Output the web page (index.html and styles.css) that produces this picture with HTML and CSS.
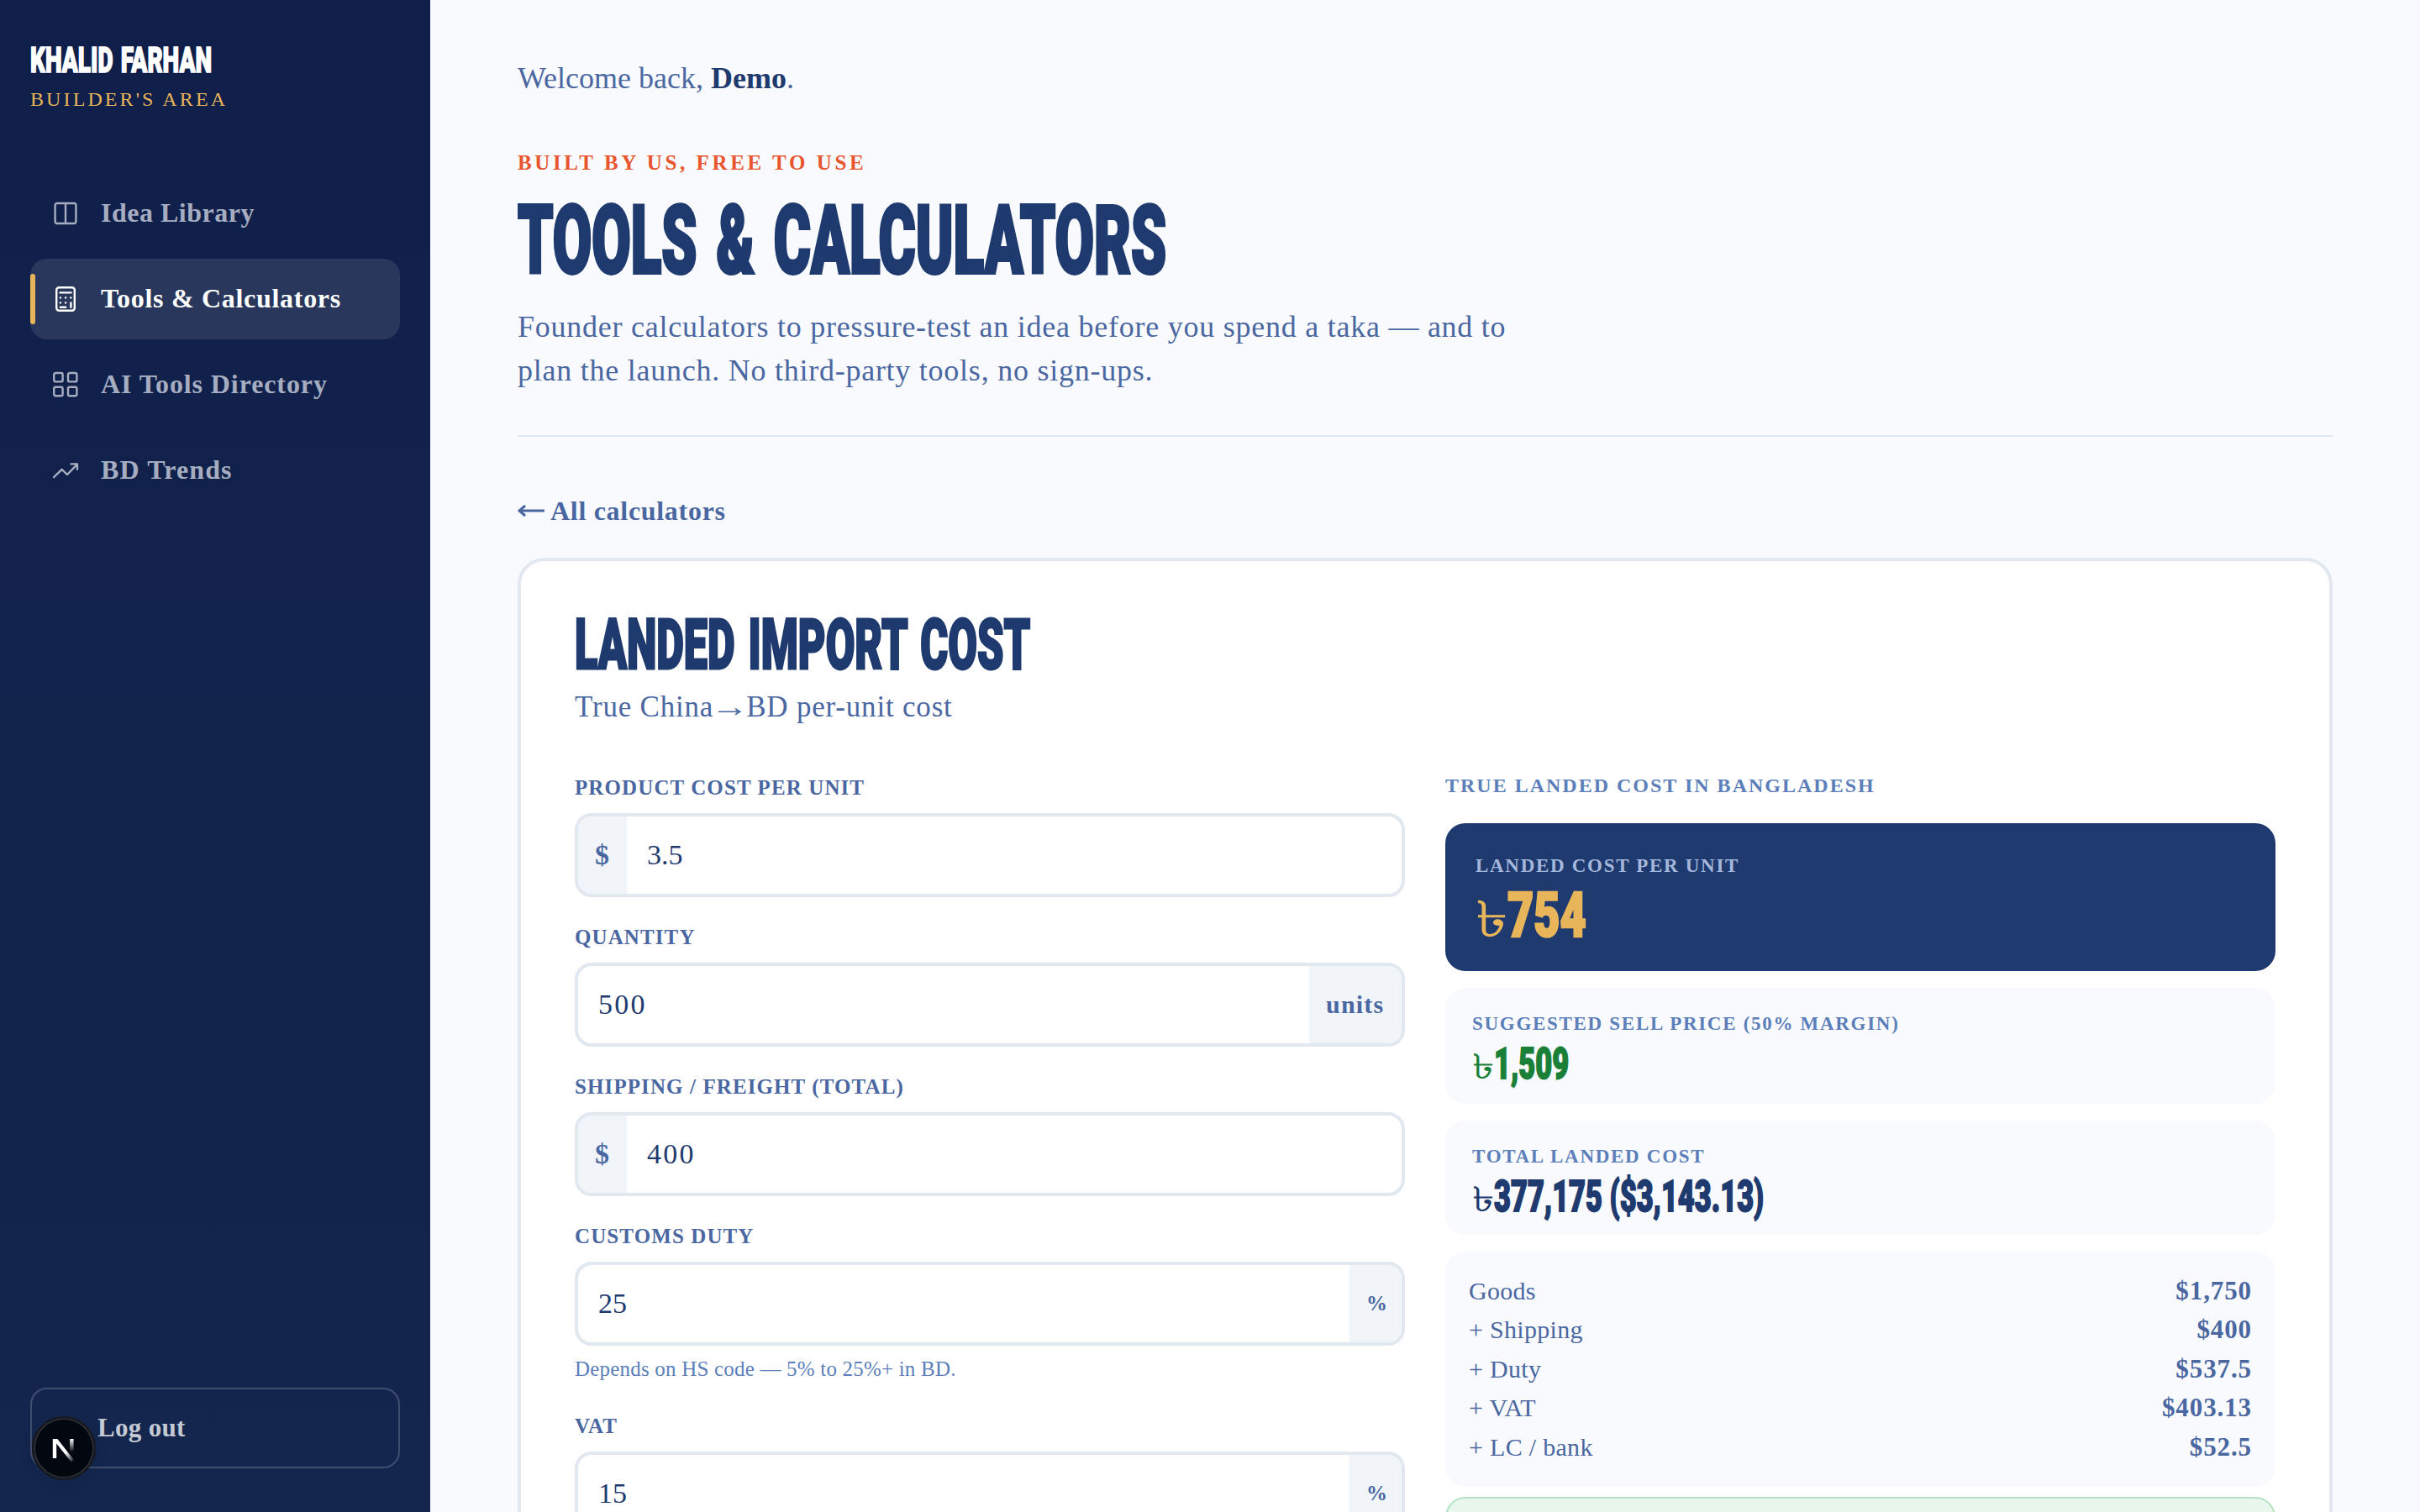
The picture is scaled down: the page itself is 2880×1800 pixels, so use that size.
FILE: index.html
```html
<!DOCTYPE html>
<html lang="en">
<head>
    <meta charset="UTF-8" />
    <title>Tools & Calculators</title>
    <link rel="stylesheet" href="styles.css">
</head>
<body>
    <aside class="sidebar">
        <div class="brand"><span class="display">KHALID FARHAN</span></div>
        <div class="brand-sub">BUILDER'S AREA</div>
        <nav class="nav">
            <a class="nav-item">
                <svg viewBox="0 0 18 18"><rect x="2.8" y="3" width="12.4" height="12" rx="1.2" /><path d="M9 3v12" /></svg>
                <span class="nav-ideas">Idea Library</span>
            </a>
            <a class="nav-item active">
                <svg viewBox="0 0 18 18"><rect x="3.6" y="2.1" width="10.8" height="13.8" rx="1.5" /><path d="M5.8 5.2h6.5M5.9 8.2h.1M9 8.2h.1M12.1 8.2h.1M5.9 11.2h.1M9 11.2h.1M5.9 13.9h3.2M12.2 11.2v2.7" /></svg>
                <span class="nav-tools">Tools & Calculators</span>
            </a>
            <a class="nav-item">
                <svg viewBox="0 0 18 18"><rect x="2.1" y="2" width="5.2" height="5.2" rx="1" /><rect x="10.5" y="2" width="5.2" height="5.2" rx="1" /><rect x="2.1" y="10.4" width="5.2" height="5.2" rx="1" /><rect x="10.5" y="10.4" width="5.2" height="5.2" rx="1" /></svg>
                <span class="nav-ai">AI Tools Directory</span>
            </a>
            <a class="nav-item">
                <svg viewBox="0 0 18 18"><path d="M2 13.1l4.8-4.7 3.2 3.1 6-6.2M12.3 5.2H16v3.2" /></svg>
                <span class="nav-trends">BD Trends</span>
            </a>
        </nav>
        <button class="logout">Log out</button>
    </aside>

    <main class="main">
        <p class="welcome">Welcome back, <strong>Demo</strong>.</p>
        <header class="page-header">
            <p class="eyebrow">BUILT BY US, FREE TO USE</p>
            <h1><span class="display">TOOLS & CALCULATORS</span></h1>
            <p class="intro">Founder calculators to pressure-test an idea before you spend a taka — and to<br>plan the launch. No third-party tools, no sign-ups.</p>
        </header>
        <a class="back"><svg class="arrow" viewBox="0 0 32 20"><path d="M32 10H2M9 4l-7 6 7 6" /></svg><span>All calculators</span></a>

        <section class="card">
            <h2><span class="display">LANDED IMPORT COST</span></h2>
            <p class="card-sub">True China<span class="arrow-text">→</span>BD per-unit cost</p>
            <div class="columns">
                <form class="fields">
                    <label class="field">
                        <span class="field-label">PRODUCT COST PER UNIT</span>
                        <span class="control"><span class="prefix">$</span><span class="value">3.5</span></span>
                    </label>
                    <label class="field">
                        <span class="field-label">QUANTITY</span>
                        <span class="control"><span class="value wide">500</span><span class="suffix units">units</span></span>
                    </label>
                    <label class="field">
                        <span class="field-label">SHIPPING / FREIGHT (TOTAL)</span>
                        <span class="control"><span class="prefix">$</span><span class="value wide">400</span></span>
                    </label>
                    <label class="field">
                        <span class="field-label">CUSTOMS DUTY</span>
                        <span class="control"><span class="value">25</span><span class="suffix">%</span></span>
                        <span class="hint">Depends on HS code — 5% to 25%+ in BD.</span>
                    </label>
                    <label class="field">
                        <span class="field-label">VAT</span>
                        <span class="control"><span class="value">15</span><span class="suffix">%</span></span>
                    </label>
                </form>

                <div class="results">
                    <p class="results-title">TRUE LANDED COST IN BANGLADESH</p>
                    <div class="result primary">
                        <span class="result-label">LANDED COST PER UNIT</span>
                        <span class="amount"><span class="taka">৳</span><span class="display">754</span></span>
                    </div>
                    <div class="result">
                        <span class="result-label">SUGGESTED SELL PRICE (50% MARGIN)</span>
                        <span class="amount green"><span class="taka">৳</span><span class="display">1,509</span></span>
                    </div>
                    <div class="result total">
                        <span class="result-label">TOTAL LANDED COST</span>
                        <span class="amount"><span class="taka">৳</span><span class="display">377,175 ($3,143.13)</span></span>
                    </div>
                    <div class="breakdown">
                        <div class="row"><span>Goods</span><b>$1,750</b></div>
                        <div class="row"><span>+ Shipping</span><b>$400</b></div>
                        <div class="row"><span>+ Duty</span><b>$537.5</b></div>
                        <div class="row"><span>+ VAT</span><b>$403.13</b></div>
                        <div class="row"><span>+ LC / bank</span><b>$52.5</b></div>
                    </div>
                    <div class="notice"></div>
                </div>
            </div>
        </section>
    </main>

    <div class="dev-badge">
        <svg viewBox="0 0 40 40">
            <defs>
                <linearGradient id="fade-a" x1="0" y1="0" x2="1" y2="1"><stop offset="0.6" stop-color="#fff" /><stop offset="1" stop-color="#fff" stop-opacity="0" /></linearGradient>
                <linearGradient id="fade-b" x1="0" y1="0" x2="0" y2="1"><stop offset="0" stop-color="#fff" /><stop offset="1" stop-color="#fff" stop-opacity="0" /></linearGradient>
            </defs>
            <path d="M8 10h5l18 23-3 2L12 15v16H8z" fill="url(#fade-a)" />
            <path d="M26.5 10h4v14h-4z" fill="url(#fade-b)" />
        </svg>
    </div>
</body>
</html>
```
FILE: styles.css
```css
:root {
    --navy: #1e3a6e;
    --blue: #4a67a1;
    --light-blue: #5c7fba;
    --gold: #e8b55a;
    --line: #e2e8f0;
    --page: #f8fafd;
}

* {
    box-sizing: border-box;
}

body {
    margin: 0;
    height: 1800px;
    display: flex;
    overflow: hidden;
    background-color: var(--page);
    color: var(--blue);
    font-family: "Liberation Serif", serif;
}

p, h1, h2 {
    margin: 0;
    white-space: nowrap;
}

/* Heavy condensed display face */
.display {
    display: inline-block;
    font-family: Roboto, "Liberation Sans", sans-serif;
    font-weight: 900;
    -webkit-text-stroke: 0.035em currentColor;
    transform-origin: left center;
    white-space: nowrap;
}

/* Sidebar */
.sidebar {
    width: 512px;
    height: 1800px;
    flex-shrink: 0;
    padding: 44px 36px 52px;
    display: flex;
    flex-direction: column;
    background: linear-gradient(#0f1f4a, #14264d);
}

.brand {
    height: 54px;
    line-height: 54px;
    color: white;
    font-size: 43px;
}

.brand .display {
    word-spacing: 0.08em;
    transform: scaleX(0.65);
}

.brand-sub {
    height: 40px;
    line-height: 40px;
    color: var(--gold);
    font-size: 24px;
    letter-spacing: 3.1px;
}

.nav {
    margin-top: 68px;
    display: flex;
    flex-direction: column;
    gap: 6px;
}

.nav-item {
    height: 96px;
    padding-left: 24px;
    display: flex;
    align-items: center;
    gap: 24px;
    border-radius: 20px;
    color: #a6adc0;
    font-size: 32px;
    font-weight: bold;
}

.nav-item svg {
    width: 36px;
    height: 36px;
    fill: none;
    stroke: currentColor;
    stroke-width: 1.2;
    stroke-linecap: round;
    stroke-linejoin: round;
}

.nav-item.active {
    position: relative;
    background-color: #28375b;
    color: white;
}

.nav-item.active::before {
    content: "";
    position: absolute;
    left: 0;
    top: 18px;
    width: 6px;
    height: 60px;
    border-radius: 3px;
    background-color: var(--gold);
}

.nav-item span {
    padding-bottom: 2px;
}

.nav-ideas {
    letter-spacing: 0.5px;
}

.nav-tools {
    letter-spacing: 0.7px;
}

.nav-ai {
    letter-spacing: 0.9px;
}

.nav-trends {
    letter-spacing: 1.1px;
}

.logout {
    margin-top: auto;
    height: 96px;
    padding: 0 0 0 78px;
    border: 2px solid #414e70;
    border-radius: 20px;
    background: none;
    color: #c4c9d4;
    font-family: inherit;
    font-size: 31px;
    font-weight: bold;
    letter-spacing: 0.3px;
    text-align: left;
}

.dev-badge {
    position: absolute;
    left: 38px;
    top: 1686px;
    width: 76px;
    height: 76px;
    padding: 14px;
    border: 2px solid #17191d;
    border-radius: 50%;
    background-color: #03070f;
    box-shadow: inset 0 0 0 2px #2b2e36, 0 4px 16px rgba(0, 0, 0, 0.1);
}

/* Page */
.main {
    flex: 1;
    padding: 68px 104px 0;
}

.welcome {
    height: 50px;
    line-height: 50px;
    font-size: 36px;
}

.welcome strong {
    color: var(--navy);
}

.page-header {
    height: 402px;
    padding-top: 56px;
    border-bottom: 2px solid var(--line);
}

.eyebrow {
    height: 40px;
    line-height: 40px;
    color: #e8552f;
    font-size: 25px;
    font-weight: bold;
    letter-spacing: 3.6px;
}

h1 {
    height: 112px;
    margin-top: 17px;
    line-height: 112px;
    color: var(--navy);
    font-size: 113px;
}

h1 .display {
    word-spacing: 0.09em;
    transform: scaleX(0.597);
}

.intro {
    margin-top: 20px;
    line-height: 52px;
    font-size: 36px;
    letter-spacing: 0.75px;
}

.back {
    height: 50px;
    margin-top: 63px;
    display: flex;
    align-items: center;
    gap: 7px;
    font-size: 32px;
    font-weight: bold;
    letter-spacing: 0.7px;
}

.arrow {
    width: 32px;
    height: 20px;
    fill: none;
    stroke: currentColor;
    stroke-width: 3;
}

.card {
    height: 1300px;
    margin-top: 31px;
    padding: 60px 64px;
    background-color: white;
    border: 4px solid var(--line);
    border-radius: 32px;
}

h2 {
    height: 80px;
    line-height: 80px;
    color: var(--navy);
    font-size: 83px;
}

h2 .display {
    word-spacing: 0.07em;
    transform: scaleX(0.606);
}

.card-sub {
    height: 44px;
    margin-top: 12px;
    line-height: 44px;
    font-size: 35px;
    letter-spacing: 0.8px;
}

.arrow-text {
    display: inline-block;
    width: 35px;
    margin: 0 2px;
    line-height: 1;
    letter-spacing: 0;
    transform: scaleX(1.3);
}

.columns {
    margin-top: 54px;
    display: grid;
    grid-template-columns: 988px 988px;
    gap: 48px;
}

.fields {
    padding-top: 3px;
    display: flex;
    flex-direction: column;
    gap: 31px;
}

.field {
    display: flex;
    flex-direction: column;
}

.field-label {
    height: 34px;
    margin-bottom: 13px;
    line-height: 34px;
    font-size: 25px;
    font-weight: bold;
    letter-spacing: 1.1px;
}

.control {
    height: 100px;
    display: flex;
    border: 4px solid var(--line);
    border-radius: 20px;
    overflow: hidden;
}

.value {
    flex: 1;
    padding-left: 24px;
    line-height: 92px;
    color: var(--navy);
    font-size: 34px;
}

.value.wide {
    letter-spacing: 2.2px;
}

.prefix,
.suffix {
    padding-left: 20px;
    background-color: #f1f5fa;
    line-height: 92px;
    font-weight: bold;
}

.prefix {
    width: 58px;
    font-size: 34px;
}

.suffix {
    width: 62px;
    font-size: 25px;
}

.suffix.units {
    width: 110px;
    font-size: 30px;
    letter-spacing: 1.2px;
}

.hint {
    height: 36px;
    margin: 10px 0 2px;
    line-height: 36px;
    color: var(--light-blue);
    font-size: 25px;
    letter-spacing: 0.2px;
}

/* Results */
.results-title {
    height: 34px;
    margin-bottom: 28px;
    line-height: 34px;
    color: var(--light-blue);
    font-size: 24px;
    font-weight: bold;
    letter-spacing: 2px;
}

.result {
    height: 138px;
    margin-bottom: 20px;
    padding: 28px 32px;
    border-radius: 24px;
    background-color: var(--page);
    color: var(--navy);
}

.result.total {
    height: 136px;
}

.result-label {
    display: block;
    height: 30px;
    line-height: 30px;
    color: var(--light-blue);
    font-size: 23px;
    font-weight: bold;
    letter-spacing: 1.7px;
}

.amount {
    display: flex;
    align-items: baseline;
    height: 60px;
    padding-top: 3px;
    line-height: 60px;
    font-size: 51px;
}

.amount .display {
    transform: scaleX(0.675);
}

/* The currency sign is lighter and shorter than the digits */
.taka {
    display: inline-block;
    width: 0.625em;
    font-size: 0.8em;
    line-height: 1;
    transform: scaleX(1.3);
    transform-origin: left center;
}

.green {
    color: #1a8038;
}

.result.primary {
    height: 176px;
    padding: 36px;
    background-color: var(--navy);
}

.primary .result-label {
    color: #a5b8dc;
}

.primary .amount {
    height: 90px;
    margin-top: -2px;
    padding-top: 0;
    line-height: 90px;
    color: var(--gold);
    font-size: 75px;
}

.primary .amount .display {
    transform: scaleX(0.72);
}

.breakdown {
    height: 280px;
    padding: 24px 28px;
    border-radius: 24px;
    background-color: var(--page);
    font-size: 30px;
    letter-spacing: 0.3px;
}

.row {
    height: 46.4px;
    line-height: 46.4px;
    display: flex;
    justify-content: space-between;
}

.row b {
    font-size: 31px;
    letter-spacing: 0.9px;
}

.notice {
    height: 120px;
    margin-top: 12px;
    border: 2px solid #b5e3c4;
    border-radius: 24px;
    background-color: #e9f6ec;
}
```
